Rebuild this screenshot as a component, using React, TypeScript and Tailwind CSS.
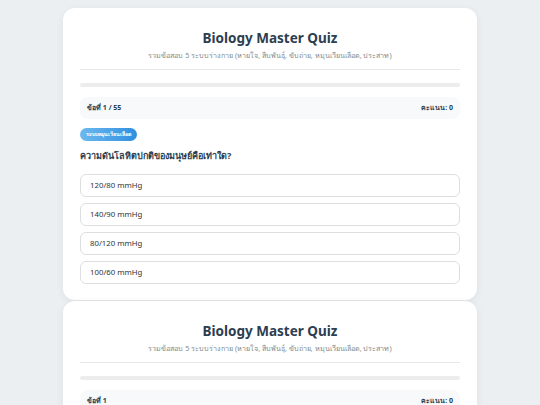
import React from "react";

const font = { fontFamily: '"Noto Sans", "Open Sans", sans-serif' };

function Card({ counter, showQuestion }: { counter: string; showQuestion: boolean }) {
  const options = ["120/80 mmHg", "140/90 mmHg", "80/120 mmHg", "100/60 mmHg"];
  return (
    <div className="w-[414px] mx-auto bg-white rounded-[12px] px-[17px] pt-[21px] pb-[16px] shadow-[0_2px_8px_rgba(0,0,0,0.06)]">
      <div className="text-center border-b border-[#e6e9ec] pb-[8px]">
        <div className="text-[13.5px] leading-[18px] font-bold text-[#2c3e50]">Biology Master Quiz</div>
        <div className="mt-[2px] text-[7.2px] leading-[12px] text-[#7f8c8d]">
          รวมข้อสอบ 5 ระบบร่างกาย (หายใจ, สืบพันธุ์, ขับถ่าย, หมุนเวียนเลือด, ประสาท)
        </div>
      </div>
      <div className="mt-[13px] h-[4px] rounded-full bg-[#ececec]" />
      <div className="mt-[10px] h-[22px] rounded-[8px] bg-[#f8f9fa] px-[7px] flex items-center justify-between text-[7px] font-bold text-[#2c3e50]">
        <span>{counter}</span>
        <span>คะแนน: 0</span>
      </div>
      {showQuestion && (
        <>
          <div className="mt-[9px] flex">
            <span className="h-[13px] px-[6px] rounded-full bg-gradient-to-r from-[#6bb9ee] to-[#2f8fe0] text-white text-[5.3px] font-bold flex items-center">
              ระบบหมุนเวียนเลือด
            </span>
          </div>
          <div className="mt-[7px] text-[9px] leading-[16px] font-bold text-[#2c3e50]">
            ความดันโลหิตปกติของมนุษย์คือเท่าใด?
          </div>
          <div className="mt-[10px] flex flex-col gap-[6px]">
            {options.map((o) => (
              <div
                key={o}
                className="h-[23px] rounded-[6px] border border-[#dcdfe2] px-[9px] flex items-center text-[7.8px] text-[#333]"
              >
                {o}
              </div>
            ))}
          </div>
        </>
      )}
    </div>
  );
}

export default function App() {
  return (
    <div className="min-h-[405px] bg-[#eceff1] pt-[8px] flex flex-col gap-[1px]" style={font}>
      <Card counter="ข้อที่ 1 / 55" showQuestion />
      <Card counter="ข้อที่ 1" showQuestion={false} />
    </div>
  );
}
